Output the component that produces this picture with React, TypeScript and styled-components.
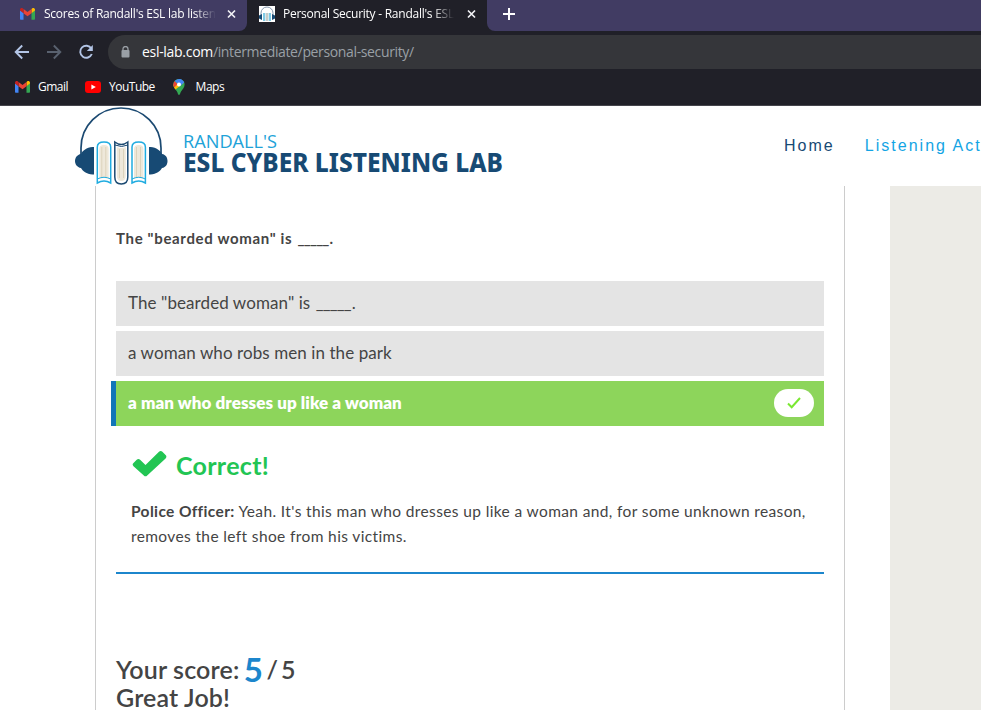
import React from "react";
import styled, { createGlobalStyle } from "styled-components";

const GlobalStyle = createGlobalStyle`
  * { box-sizing: border-box; }
  html, body { margin: 0; padding: 0; overflow: hidden; background: #fff; }
`;

const Window = styled.div`
  width: 981px;
  height: 710px;
  overflow: hidden;
  display: flex;
  flex-direction: column;
  background: #fff;
`;

const Chrome = styled.header`
  flex: none;
  height: 106px;
  background: #202028;
  border-bottom: 1px solid #45454c;
  font-family: "Open Sans", "Noto Sans", sans-serif;
  font-size: 12px;
  color: #fff;
`;

const TabStrip = styled.div`
  display: flex;
  height: 31px;
  background: #202028;
`;

const Tab = styled.div<{ $active?: boolean }>`
  display: flex;
  align-items: center;
  width: ${(p) => (p.$active ? 240 : 247)}px;
  height: 31px;
  padding: 0 9px 3px ${(p) => (p.$active ? 12 : 20)}px;
  background: ${(p) => (p.$active ? "#202028" : "#413c63")};
  border-radius: ${(p) => (p.$active ? "0" : "0 0 8px 0")};
  svg { flex: none; }
`;

const TabTitle = styled.span<{ $gap: number; $width: number; $spacing: number }>`
  flex: none;
  width: ${(p) => p.$width}px;
  margin-left: ${(p) => p.$gap}px;
  margin-right: auto;
  overflow: hidden;
  white-space: nowrap;
  line-height: 18px;
  letter-spacing: ${(p) => p.$spacing}px;
  mask-image: linear-gradient(to right, #000 calc(100% - 22px), transparent);
`;

const StripRest = styled.div`
  flex: 1;
  padding: 7px 0 0 15px;
  background: #413c63;
  border-radius: 0 0 0 8px;
`;

const Toolbar = styled.div`
  display: flex;
  align-items: center;
  height: 42px;
  padding-left: 14px;
`;

const NavButtons = styled.div`
  display: flex;
  gap: 16px;
  width: 94px;
  svg { display: block; }
`;

const AddressBar = styled.div`
  flex: 1;
  display: flex;
  align-items: center;
  height: 34px;
  padding-left: 13px;
  background: #35363a;
  border-radius: 17px 0 0 17px;
  font-size: 14px;
`;

const Url = styled.span`
  margin-left: 12px;
  line-height: 20px;
  letter-spacing: -0.36px;
  color: #9aa0a6;
  b { font-weight: 400; color: #fff; letter-spacing: -0.3px; }
`;

const Bookmarks = styled.div`
  display: flex;
  align-items: center;
  height: 27px;
  padding-left: 15px;
`;

const Bookmark = styled.div<{ $width: number }>`
  display: flex;
  align-items: center;
  gap: 8px;
  width: ${(p) => p.$width}px;
  letter-spacing: -0.5px;
`;

const SiteHeader = styled.div`
  flex: none;
  display: flex;
  height: 80px;
  padding-left: 74px;
  svg { flex: none; }
`;

const SiteNav = styled.nav`
  flex: none;
  display: flex;
  gap: 30px;
  margin-left: 280px;
  padding-top: 30px;
  font: 16px/20px "Liberation Sans", Arial, sans-serif;
  letter-spacing: 2.02px;
  white-space: nowrap;
`;

const NavLink = styled.a<{ $current?: boolean }>`
  color: ${(p) => (p.$current ? "#174a74" : "#13a4e4")};
`;

const Body = styled.main`
  flex: 1;
  display: flex;
  justify-content: space-between;
  min-height: 0;
  padding-left: 95px;
  font-family: Lato, sans-serif;
  color: #444;
`;

const Content = styled.section`
  width: 750px;
  padding: 42px 20px 0;
  border: solid #ccc;
  border-width: 0 1px;
`;

const Sidebar = styled.aside`
  width: 91px;
  background: #ecebe6;
`;

const Blank = styled.span`
  letter-spacing: -0.8px;
  margin: 0 1px;
`;

const Question = styled.h4`
  margin: 0 0 32px;
  font-size: 15px;
  line-height: 21px;
  font-weight: 700;
  letter-spacing: 0.66px;
`;

const Answer = styled.div<{ $correct?: boolean }>`
  display: flex;
  align-items: center;
  justify-content: space-between;
  height: 45px;
  margin-bottom: 5px;
  padding: 0 10px 0 12px;
  font-size: 17px;
  letter-spacing: 0.08px;
  background: ${(p) => (p.$correct ? "#8dd55b" : "#e4e4e4")};
  ${(p) => p.$correct && `
    margin-left: -5px;
    border-left: 5px solid #1176b8;
    color: #fff;
    font-weight: 800;
  `}
`;

const AnswerText = styled.span`
  padding-bottom: 2px;
`;

const CheckPill = styled.span`
  display: flex;
  align-items: center;
  justify-content: center;
  width: 40px;
  height: 28px;
  margin-bottom: 1px;
  border-radius: 14px;
  background: #fff;
`;

const Feedback = styled.div`
  height: 143px;
  padding: 18px 15px 0;
  border-bottom: 2px solid #1c86cc;
`;

const FeedbackTitle = styled.div`
  display: flex;
  align-items: center;
  gap: 9px;
  height: 32px;
  padding-left: 2px;
  font-size: 25px;
  font-weight: 700;
  letter-spacing: 0.3px;
  color: #22c553;
  svg { margin: 0 0 3px -1px; }
`;

const Explanation = styled.p`
  margin: 18px 0 0;
  font-size: 15.5px;
  line-height: 25px;
  letter-spacing: 0.37px;
  white-space: nowrap;
`;

const Score = styled.div`
  margin-top: 78px;
  font-size: 25px;
  line-height: 28px;
  font-weight: 600;
  letter-spacing: 0.15px;
  white-space: nowrap;
  strong {
    position: relative;
    top: 3px;
    margin-left: -2px;
    font-size: 33px;
    line-height: 28px;
    font-weight: 700;
    color: #1c86cc;
  }
`;

const Total = styled.span`
  letter-spacing: -0.7px;
  word-spacing: -2px;
`;

const GmailIcon = () => (
  <svg width="15" height="12" viewBox="0 0 15 12">
    <path d="M0 2v8.7c0 .6.4 1.1 1 1.1h2.5V4.9z" fill="#4285f4" />
    <path d="M11.5 4.9v6.9H14c.6 0 1-.5 1-1.1V2z" fill="#34a853" />
    <path d="M11.5 1v4.2L15 2.6V1.8C15 .2 13.2-.5 12.1.4z" fill="#fbbc04" />
    <path d="M3.5 5.2V1l4 3 4-3v4.2l-4 3z" fill="#ea4335" />
    <path d="M0 1.8v.8l3.5 2.6V1L2.9.4C1.8-.5 0 .2 0 1.8z" fill="#c5221f" />
  </svg>
);

const YouTubeIcon = () => (
  <svg width="16" height="12" viewBox="0 0 16 12">
    <rect width="16" height="12" rx="3" fill="#f00" />
    <path d="M6.4 3.4v5.2L10.8 6z" fill="#fff" />
  </svg>
);

const MapsIcon = () => (
  <svg width="12" height="16" viewBox="0 0 12 16">
    <path d="M.4 5.6C.4 2.500 2.800.1 6 .1s5.600 2.400 5.600 5.500c0 3.200-2 4.600-3.400 6.600C7 14 7.300 15.900 6 15.900S5 14 3.800 12.200C2.400 10.200.4 8.800.4 5.600z" fill="#34a853" />
    <path d="M.4 5.600C.4 8 1.500 9.300 2.500 10.600L11.200 3.400 8 3.500 4 5z" fill="#fbbc04" />
    <path d="M1.700 2.100A5.500 5.500 0 0 0 1.300 8.600L4.500 5z" fill="#ea4335" />
    <path d="M1.700 2.100A5.600 5.600 0 0 1 11.200 3.400L7.600 6.800 4.200 4.200z" fill="#4285f4" />
    <circle cx="6" cy="5.500" r="2" fill="#fff" />
  </svg>
);

const CloseIcon = () => (
  <svg width="13" height="14" viewBox="0 0 13 14" stroke="#f1f1f5" strokeWidth="1.7">
    <path d="M3 3.500l7 7M10 3.500l-7 7" />
  </svg>
);

const SiteLogo = () => (
  <svg width="94" height="80" viewBox="0 0 94 80">
    <path d="M7 50V42a40 40 0 0 1 80 0v8" fill="none" stroke="#1b4971" strokeWidth="1.7" />
    <path d="M20 41.500V69h-1.500C12.500 68.500 8.500 65.500 7 62.500 3 62 1 58.500 1 55.500s2-6.500 6-7c1.500-3.500 5.500-6.500 11.500-7z" transform="translate(0 -.500)" fill="#174a74" />
    <path d="M75 41.500V69h1.500c6-.5 10-3.500 11.500-6.500 4-.5 5.500-4 5.500-7s-1.500-6.500-5.500-7c-1.500-3.500-5.500-6.500-11.500-7z" transform="translate(0 -.500)" fill="#174a74" />
    {[23.300, 58].map((x) => (
      <g key={x} transform={`translate(${x} 35)`}>
        <path d="M0 42V6Q0 1 6.700 1T13.400 6v36q-6.700-4-13.400 0z" fill="#fff" stroke="#20ace0" strokeWidth="1.500" />
        <path d="M2 38V8q0-4 4.700-4t4.700 4v30q-4.700-2-9.400 0z" fill="#eee8da" />
        <path d="M4.500 6v30M8.500 6v30" stroke="#dcd3bd" strokeWidth="1" />
        <path d="M0 38q6.700-3.500 13.400 0" fill="none" stroke="#20ace0" />
      </g>
    ))}
    <path d="M40.800 36q6.500 5 13 0v35q0 7-6.500 7t-6.500-7z" fill="#fff" stroke="#1b4971" strokeWidth="1.500" />
    <path d="M42.800 41q4.500 2 9 0v28q0 6-4.500 6t-4.500-6z" fill="#eee8da" />
    <path d="M45.500 43v29M49.500 43v29" stroke="#dcd3bd" />
    <path d="M41 39q6.500 3 13 0" fill="none" stroke="#1b4971" />
  </svg>
);

const Wordmark = () => (
  <svg width="336" height="80" viewBox="0 0 336 80">
    <text x="15" y="42" fontFamily='"Open Sans", sans-serif' fontSize="18.500" fontWeight="400" fill="#20a2d8" textLength="94" lengthAdjust="spacingAndGlyphs">RANDALL'S</text>
    <text x="15" y="66" fontFamily='"Noto Sans", sans-serif' fontSize="26" fontWeight="800" fill="#174a74" textLength="320" lengthAdjust="spacingAndGlyphs">ESL CYBER LISTENING LAB</text>
  </svg>
);

const Favicon = () => (
  <svg width="16" height="16" viewBox="0 0 16 16">
    <path d="M0 0h16v16H0z" fill="#fff" />
    <path d="M2 9V7a6 6 0 0 1 12 0v2" fill="none" stroke="#8597ad" />
    <path d="M0 9.500L3 8v6L0 12.500zM16 9.500L13 8v6l3-1.500z" fill="#174a74" />
    <path d="M4 7h2.300v8H4zM9.700 7H12v8H9.700z" fill="#7fc9e5" />
    <path d="M6.800 7h2.400v8H6.800z" fill="#c7ccc9" />
  </svg>
);

export default function App() {
  return (
    <Window>
      <GlobalStyle />
      <Chrome>
        <TabStrip>
          <Tab>
            <GmailIcon />
            <TabTitle $gap={9} $width={172} $spacing={-0.25}>Scores of Randall's ESL lab listening</TabTitle>
            <CloseIcon />
          </Tab>
          <Tab $active>
            <Favicon />
            <TabTitle $gap={8} $width={171} $spacing={-0.25}>Personal Security - Randall's ESL Cyber</TabTitle>
            <CloseIcon />
          </Tab>
          <StripRest>
            <svg width="14" height="14" viewBox="0 0 14 14" stroke="#fff" strokeWidth="2"><path d="M1 7h12M7 1v12" /></svg>
          </StripRest>
        </TabStrip>
        <Toolbar>
          <NavButtons>
            <svg width="16" height="16" viewBox="0 0 16 16" fill="none" stroke="#b3c5e6" strokeWidth="1.900"><path d="M15 8H2M8.200 1.500L1.700 8l6.500 6.500" /></svg>
            <svg width="16" height="16" viewBox="0 0 16 16" fill="none" stroke="#59616f" strokeWidth="1.900"><path d="M1 8h13M7.800 1.500L14.300 8l-6.500 6.500" /></svg>
            <svg width="16" height="16" viewBox="0 0 16 16" fill="none" stroke="#b3c5e6" strokeWidth="1.900"><path d="M13.300 4.500A6 6 0 1 0 13.800 10" /><path d="M14.800 1v6H8.800z" fill="#b3c5e6" stroke="none" /></svg>
          </NavButtons>
          <AddressBar>
            <svg width="9" height="12" viewBox="0 0 9 12"><path d="M2 5V3a2.500 2.500 0 0 1 5 0v2" fill="none" stroke="#9aa0a6" strokeWidth="1.300" /><rect x="0.500" y="4" width="8" height="7.500" rx="1" fill="#9aa0a6" /></svg>
            <Url><b>esl-lab.com</b>/intermediate/personal-security/</Url>
          </AddressBar>
        </Toolbar>
        <Bookmarks>
          <Bookmark $width={70}><GmailIcon />Gmail</Bookmark>
          <Bookmark $width={88}><YouTubeIcon />YouTube</Bookmark>
          <Bookmark $width={60}><MapsIcon />&nbsp;Maps</Bookmark>
        </Bookmarks>
      </Chrome>
      <SiteHeader>
        <SiteLogo />
        <Wordmark />
        <SiteNav>
          <NavLink $current>Home</NavLink>
          <NavLink>Listening Activities</NavLink>
        </SiteNav>
      </SiteHeader>
      <Body>
        <Content>
          <Question>The "bearded woman" is <Blank>_____</Blank>.</Question>
          <Answer><AnswerText>The "bearded woman" is <Blank>_____</Blank>.</AnswerText></Answer>
          <Answer><AnswerText>a woman who robs men in the park</AnswerText></Answer>
          <Answer $correct>
            <AnswerText>a man who dresses up like a woman</AnswerText>
            <CheckPill>
              <svg width="16" height="14" viewBox="0 0 16 14" fill="none" stroke="#7ae832" strokeWidth="2"><path d="M2 7.500l3.700 3.700L14 2" /></svg>
            </CheckPill>
          </Answer>
          <Feedback>
            <FeedbackTitle>
              <svg width="35" height="27" viewBox="0 0 35 27"><path d="M1.500 13l3.200-3.200q1.700-1.700 3.400 0l5.400 5.300L27 1.800q1.700-1.700 3.400 0L33.600 5q1.600 1.700 0 3.400L15.200 25.500q-1.700 1.700-3.400 0L1.500 16.200q-1.700-1.600 0-3.200z" fill="#22c553" /></svg>
              Correct!
            </FeedbackTitle>
            <Explanation>
              <b>Police Officer:</b> Yeah. It's this man who dresses up like a woman and, for some unknown reason,<br />
              removes the left shoe from his victims.
            </Explanation>
          </Feedback>
          <Score>Your score: <strong>5</strong><Total> / 5</Total><br />Great Job!</Score>
        </Content>
        <Sidebar />
      </Body>
    </Window>
  );
}
